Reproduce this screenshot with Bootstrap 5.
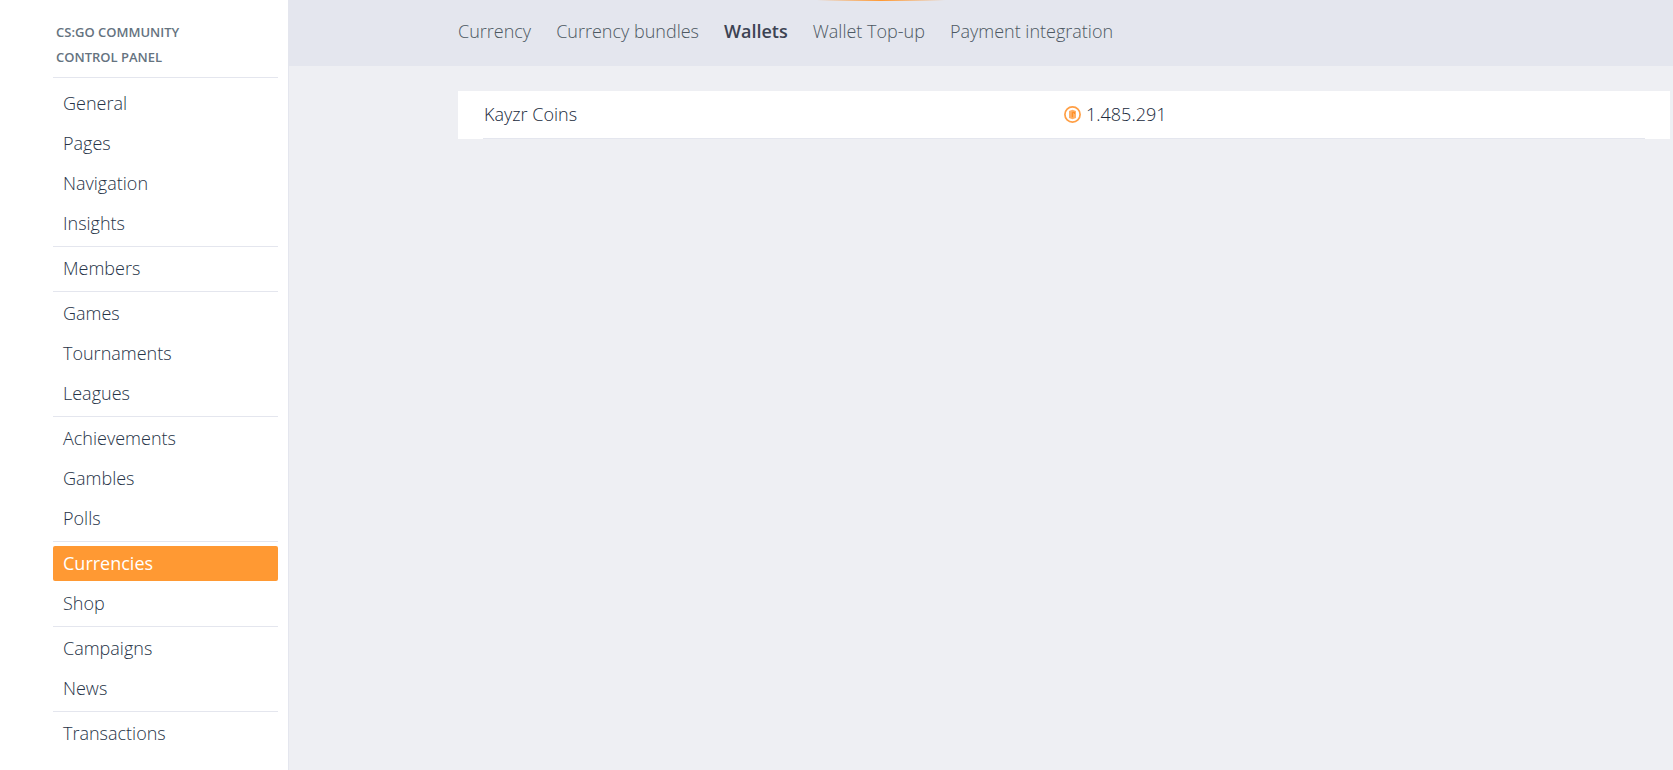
<!DOCTYPE html>
<html lang="en">
<head>
<meta charset="utf-8">
<meta name="viewport" content="width=device-width, initial-scale=1">
<title>CS:GO Community control panel – Wallets</title>
<link rel="stylesheet" href="https://cdn.jsdelivr.net/npm/bootstrap@5.3.0/dist/css/bootstrap.min.css">
<style>
  body { font-family: "Open Sans", sans-serif; font-size: 18px; line-height: 25px; font-weight: 300; color: #202a3c; background: #eeeff3; }
  .side-panel { width: 289px; padding: 20px 10px 0 53px; background: #fff; border-right: 1px solid #e4e6ee; }
  .side-title { font-size: 13px; line-height: 25px; font-weight: 600; color: #65737f; padding: 0 3px 7px; }
  .side-group { border-top: 1px solid #e4e6ee; padding-top: 4px; }
  .side-title + .side-group { padding-top: 8px; }
  .side-group .nav-link { color: #263347; padding: 5px 10px; margin-bottom: 5px; border-radius: 2px; }
  .side-group .nav-link.active { background: #ff9933; color: #fff; font-weight: 400; }
  .top-tabs { min-height: 66px; padding: 19px 0 22px 169px; background: #e4e6ee; gap: 25px; }
  .top-tabs .nav-link { padding: 0; color: #4c5862; }
  .top-tabs .nav-link.active { color: #3c4353; font-weight: 600; }
  .top-glow { top: 0; left: 528px; width: 128px; height: 1px; background: linear-gradient(90deg, transparent, #ff9933, transparent); }
  .content-area { padding: 25px 3px 25px 169px; }
  .wallet-box { background: #fff; padding: 0 25px; }
  .wallet-list { table-layout: fixed; border-collapse: separate; border-spacing: 0; }
  .wallet-list th, .wallet-list td { width: 50%; height: 48px; padding: 0; border-bottom: 1px solid #e4e6ee; }
  .wallet-list th { padding-left: 1px; font-weight: 300; }
  .coin { width: 17px; height: 17px; margin-right: 5px; }
</style>
</head>
<body>
<div class="d-flex min-vh-100">
  <aside class="side-panel flex-shrink-0">
    <h1 class="side-title text-uppercase m-0">CS:GO Community<br>control panel</h1>
    <nav class="side-group nav flex-column" aria-label="Site">
      <a class="nav-link" href="#">General</a>
      <a class="nav-link" href="#">Pages</a>
      <a class="nav-link" href="#">Navigation</a>
      <a class="nav-link" href="#">Insights</a>
    </nav>
    <nav class="side-group nav flex-column" aria-label="Members">
      <a class="nav-link" href="#">Members</a>
    </nav>
    <nav class="side-group nav flex-column" aria-label="Competition">
      <a class="nav-link" href="#">Games</a>
      <a class="nav-link" href="#">Tournaments</a>
      <a class="nav-link" href="#">Leagues</a>
    </nav>
    <nav class="side-group nav flex-column" aria-label="Engagement">
      <a class="nav-link" href="#">Achievements</a>
      <a class="nav-link" href="#">Gambles</a>
      <a class="nav-link" href="#">Polls</a>
    </nav>
    <nav class="side-group nav flex-column" aria-label="Commerce">
      <a class="nav-link active" href="#" aria-current="true">Currencies</a>
      <a class="nav-link" href="#">Shop</a>
    </nav>
    <nav class="side-group nav flex-column" aria-label="Publishing">
      <a class="nav-link" href="#">Campaigns</a>
      <a class="nav-link" href="#">News</a>
    </nav>
    <nav class="side-group nav flex-column" aria-label="Finance">
      <a class="nav-link" href="#">Transactions</a>
    </nav>
  </aside>
  <main class="flex-grow-1 position-relative">
    <div class="top-glow position-absolute"></div>
    <nav class="top-tabs nav" aria-label="Currencies">
      <a class="nav-link" href="#">Currency</a>
      <a class="nav-link" href="#">Currency bundles</a>
      <a class="nav-link active" href="#" aria-current="page">Wallets</a>
      <a class="nav-link" href="#">Wallet Top-up</a>
      <a class="nav-link" href="#">Payment integration</a>
    </nav>
    <div class="content-area">
      <div class="wallet-box">
        <table class="wallet-list w-100">
          <tbody>
            <tr>
              <th scope="row">Kayzr Coins</th>
              <td>
                <div class="d-flex align-items-center">
                  <svg class="coin" viewBox="0 0 17 17" aria-hidden="true">
                    <circle cx="8.500" cy="8.500" r="7.600" fill="#fff" stroke="#ff9f45" stroke-width="1.700"/>
                    <path d="M5 5 L8.500 3.800 L12 5 V12 L8.500 13.200 L5 12Z" fill="#ffb066"/>
                    <path d="M8.400 6.200V11.300M8.400 6.400H10.400V8" stroke="#ff8f26" stroke-width="1.200" fill="none"/>
                  </svg>
                  <span>1.485.291</span>
                </div>
              </td>
            </tr>
          </tbody>
        </table>
      </div>
    </div>
  </main>
</div>
<script src="https://cdn.jsdelivr.net/npm/bootstrap@5.3.0/dist/js/bootstrap.bundle.min.js"></script>
</body>
</html>
